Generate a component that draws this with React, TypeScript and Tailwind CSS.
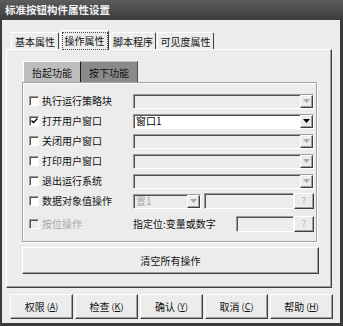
import React from "react";

const raised =
  "border border-t-white border-l-white border-r-[#404040] border-b-[#404040] shadow-[inset_-1px_-1px_0_#a0a0a0]";
const sunken =
  "border border-t-[#9a9a9a] border-l-[#9a9a9a] border-r-white border-b-white shadow-[inset_1px_1px_0_#505050]";

function Arrow({ enabled }: { enabled: boolean }) {
  return (
    <svg width="7" height="4" viewBox="0 0 7 4">
      <polygon points="0,0 7,0 3.5,4" fill={enabled ? "#000" : "#a8a8a8"} />
    </svg>
  );
}

function Combo({ text, enabled, w }: { text?: string; enabled: boolean; w?: string }) {
  return (
    <div className={`flex h-[15px] ${sunken} ${enabled ? "bg-white" : "bg-[#ececec]"} ${w ?? "flex-1"}`}>
      <div className={`flex-1 flex items-center pl-[2px] text-[10px] leading-none ${enabled ? "text-black" : "text-[#a8a8a8]"}`}>
        {text}
      </div>
      <div className={`w-[13px] flex items-center justify-center bg-[#ececec] ${raised}`}>
        <Arrow enabled={enabled} />
      </div>
    </div>
  );
}

function Check({ checked, disabled }: { checked?: boolean; disabled?: boolean }) {
  return (
    <div className={`w-[10px] h-[10px] flex items-center justify-center ${sunken} ${disabled ? "bg-[#ececec]" : "bg-white"}`}>
      {checked && (
        <svg width="7" height="6" viewBox="0 0 7 6">
          <polyline points="0.5,2.5 2.5,4.5 6.5,0.5" fill="none" stroke="#000" strokeWidth="1.4" />
        </svg>
      )}
    </div>
  );
}

function Row({ label, checked, disabled, children, extra }: { label: string; checked?: boolean; disabled?: boolean; children: React.ReactNode; extra?: string }) {
  return (
    <div className={`flex items-center h-[20px] ${extra ?? ""}`}>
      <Check checked={checked} disabled={disabled} />
      <div className={`ml-[3px] w-[91px] text-[10px] leading-none ${disabled ? "text-[#a8a8a8]" : "text-[#111]"}`}>{label}</div>
      <div className="flex-1 flex items-center">{children}</div>
    </div>
  );
}

function Q() {
  return (
    <div className={`w-[20px] h-[16px] flex items-center justify-center bg-[#ececec] text-[9px] text-[#b0b0b0] ${raised}`}>?</div>
  );
}

export default function App() {
  const btns: [string, string][] = [
    ["权限", "A"],
    ["检查", "K"],
    ["确认", "Y"],
    ["取消", "C"],
    ["帮助", "H"],
  ];
  return (
    <div className="w-[343px] h-[326px] bg-[#3a3a3a] flex flex-col font-['Noto_Sans_CJK_SC','Noto_Sans',sans-serif] select-none">
      <div className="h-[20px] flex items-center pl-[5px] text-[10.5px] font-bold text-[#f2f2f2] bg-gradient-to-b from-[#5c5c5c] to-[#3c3c3c]">
        标准按钮构件属性设置
      </div>
      <div className="flex-1 ml-[2px] mr-[3px] mb-[3px] bg-[#ececec] flex flex-col pl-[4px] pr-[8px] pt-[10px]">
        {/* outer tabs */}
        <div className="h-[19px] flex items-end pl-[5px] gap-[1px] relative z-10">
          <div className="w-[48px] h-[17px] flex items-center justify-center text-[10px] text-[#111] border border-b-0 border-t-white border-l-white border-r-[#404040] rounded-t-[2px]">基本属性</div>
          <div className="w-[49px] h-[20px] mb-[-1px] flex items-center justify-center bg-[#ececec] border border-b-0 border-t-white border-l-white border-r-[#404040] rounded-t-[2px]">
            <span className="text-[10px] text-[#111] leading-none px-[2px] py-[3px] outline outline-1 outline-dotted outline-[#505050]">操作属性</span>
          </div>
          <div className="w-[46px] h-[17px] flex items-center justify-center text-[10px] text-[#111] border border-b-0 border-t-white border-l-white border-r-[#404040] rounded-t-[2px]">脚本程序</div>
          <div className="w-[57px] h-[17px] flex items-center justify-center text-[10px] text-[#111] border border-b-0 border-t-white border-l-white border-r-[#404040] rounded-t-[2px]">可见度属性</div>
        </div>
        {/* tab panel */}
        <div className="h-[239px] flex flex-col border border-t-white border-l-white border-r-[#404040] border-b-[#404040] shadow-[inset_-1px_-1px_0_#a0a0a0] pt-[11px] pl-[15px] pr-[13px]">
          <div className="h-[21px] flex items-stretch pl-[1px]">
            <div className="w-[58px] flex items-center justify-center bg-[#bdbdbd] text-[10px] text-[#111] border border-b-0 border-t-white border-l-white border-r-[#1a1a1a]">抬起功能</div>
            <div className="w-[57px] flex items-center justify-center bg-[#8a8a8a] text-[10px] text-[#111] border border-b-0 border-t-[#c8c8c8] border-l-0 border-r-[#505050]">按下功能</div>
          </div>
          <div className="h-[160px] mr-[1px] border border-[#a0a0a0] shadow-[inset_1px_1px_0_#fff,1px_1px_0_#fff] pt-[8px] pl-[6px] pr-[2px] flex flex-col">
            <Row label="执行运行策略块"><Combo enabled={false} /></Row>
            <Row label="打开用户窗口" checked><Combo enabled text="窗口1" /></Row>
            <Row label="关闭用户窗口"><Combo enabled={false} /></Row>
            <Row label="打印用户窗口"><Combo enabled={false} /></Row>
            <Row label="退出运行系统"><Combo enabled={false} /></Row>
            <Row label="数据对象值操作">
              <Combo enabled={false} text="置1" w="w-[68px]" />
              <div className={`ml-[3px] w-[90px] h-[16px] bg-[#ececec] ${sunken}`} />
              <Q />
            </Row>
            <Row label="按位操作" disabled extra="mt-[3px]">
              <div className="w-[103px] text-[10px] leading-none text-[#111]">指定位:变量或数字</div>
              <div className={`w-[58px] h-[16px] bg-[#ececec] ${sunken}`} />
              <Q />
            </Row>
          </div>
          <div className={`mt-[5px] h-[27px] mr-[-1px] flex items-center justify-center text-[10px] text-[#111] bg-[#ececec] ${raised}`}>
            清空所有操作
          </div>
        </div>
        {/* buttons */}
        <div className="mt-[6px] h-[25px] ml-[4px] mr-[-1px] grid grid-cols-5 gap-[2px]">
          {btns.map(([t, k]) => (
            <div key={k} className={`flex items-center justify-center text-[10px] text-[#111] bg-[#ececec] ${raised}`}>
              {t}
              <span className="ml-[2px] text-[9px]">(<u>{k}</u>)</span>
            </div>
          ))}
        </div>
      </div>
    </div>
  );
}
